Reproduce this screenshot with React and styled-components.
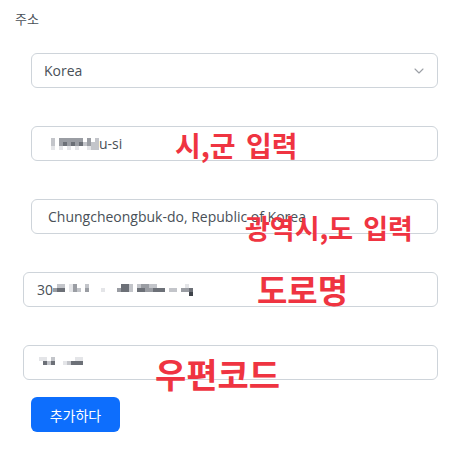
import React from 'react';
import styled, { createGlobalStyle } from 'styled-components';

const GlobalStyle = createGlobalStyle`
    body {
        margin: 0;
        background: #fff;
        font-family: "Open Sans", "Noto Sans CJK KR", sans-serif;
    }
`;

const Page = styled.div`
    width: 467px;
    height: 463px;
    padding: 10px 0 0 0;
    box-sizing: border-box;
`;

const Label = styled.div`
    font-size: 13px;
    color: #495057;
    padding-left: 15px;
    line-height: 18px;
    margin-bottom: 25px;
`;

const Field = styled.div`
    position: relative;
    padding-left: ${p => p.$left}px;
    width: 438px;
    box-sizing: border-box;
    margin-bottom: ${p => p.$gap ?? 38}px;
`;

const Box = styled.div`
    height: 35px;
    box-sizing: border-box;
    border: 1px solid #ced4da;
    border-radius: 6px;
    background: #fff;
    display: flex;
    align-items: center;
    padding: 0 13px 0 ${p => p.$pad}px;
    font-size: 14px;
    color: #495057;
`;

const Grow = styled.span`
    flex: 1;
`;

const Note = styled.span`
    position: absolute;
    left: ${p => p.$x}px;
    top: ${p => p.$y}px;
    font-family: "Noto Sans CJK KR", sans-serif;
    font-weight: 700;
    font-size: ${p => p.$size}px;
    line-height: 1;
    word-spacing: 4px;
    color: #ef3441;
    white-space: nowrap;
`;

const MosaicGrid = styled.span`
    display: inline-grid;
    grid-template-columns: repeat(${p => p.$cols}, 4px);
    grid-auto-rows: 4px;
    vertical-align: middle;
`;

const Cell = styled.span`
    background: ${p => p.$shade};
`;

const Button = styled.button`
    margin-left: 31px;
    height: 35px;
    width: 89px;
    padding: 0;
    border: 0;
    border-radius: 6px;
    background: #0d6efd;
    color: #fff;
    font-family: "Noto Sans CJK KR", sans-serif;
    font-size: 14px;
    cursor: pointer;
`;

const shades = ['transparent', '#e4e5e8', '#c3c5ca', '#9a9da3', '#6c7077', '#3f444b'];

function Mosaic({ rows }) {
    const cols = rows[0].length;
    const cells = rows.join('').split('');
    return (
        <MosaicGrid $cols={cols}>
            {cells.map((c, i) => (
                <Cell key={i} $shade={shades[Number(c)]} />
            ))}
        </MosaicGrid>
    );
}

function Chevron() {
    return (
        <svg width="10" height="6" viewBox="0 0 10 6">
            <path d="M1 1l4 4 4-4" fill="none" stroke="#9ca0a6" strokeWidth="1.1" strokeLinecap="round" strokeLinejoin="round" />
        </svg>
    );
}

export default function App() {
    return (
        <Page>
            <GlobalStyle />
            <Label>주소</Label>

            <Field $left={31}>
                <Box $pad={12}>
                    <Grow>Korea</Grow>
                    <Chevron />
                </Box>
            </Field>

            <Field $left={31}>
                <Box $pad={15}>
                    <Mosaic rows={['0203333330302', '0203434342322', '0101010100122']} />
                    <span>u-si</span>
                </Box>
                <Note $x={175} $y={5} $size={28}>시,군 입력</Note>
            </Field>

            <Field $left={31}>
                <Box $pad={16}>Chungcheongbuk-do, Republic of Korea</Box>
                <Note $x={245} $y={15} $size={27}>광역시,도 입력</Note>
            </Field>

            <Field $left={23}>
                <Box $pad={13}>
                    <span>30</span>
                    <Mosaic rows={[
                        '0220130020000000044202332200000001000',
                        '3440132030001000344204433444022033400',
                        '0000000000000000000000000000000000500',
                    ]} />
                </Box>
                <Note $x={257} $y={1} $size={33}>도로명</Note>
            </Field>

            <Field $left={23} $gap={17}>
                <Box $pad={15}>
                    <Mosaic rows={['1102000001100', '0424001244400', '0000000000000']} />
                </Box>
                <Note $x={155} $y={12} $size={34}>우편코드</Note>
            </Field>

            <Button>추가하다</Button>
        </Page>
    );
}
